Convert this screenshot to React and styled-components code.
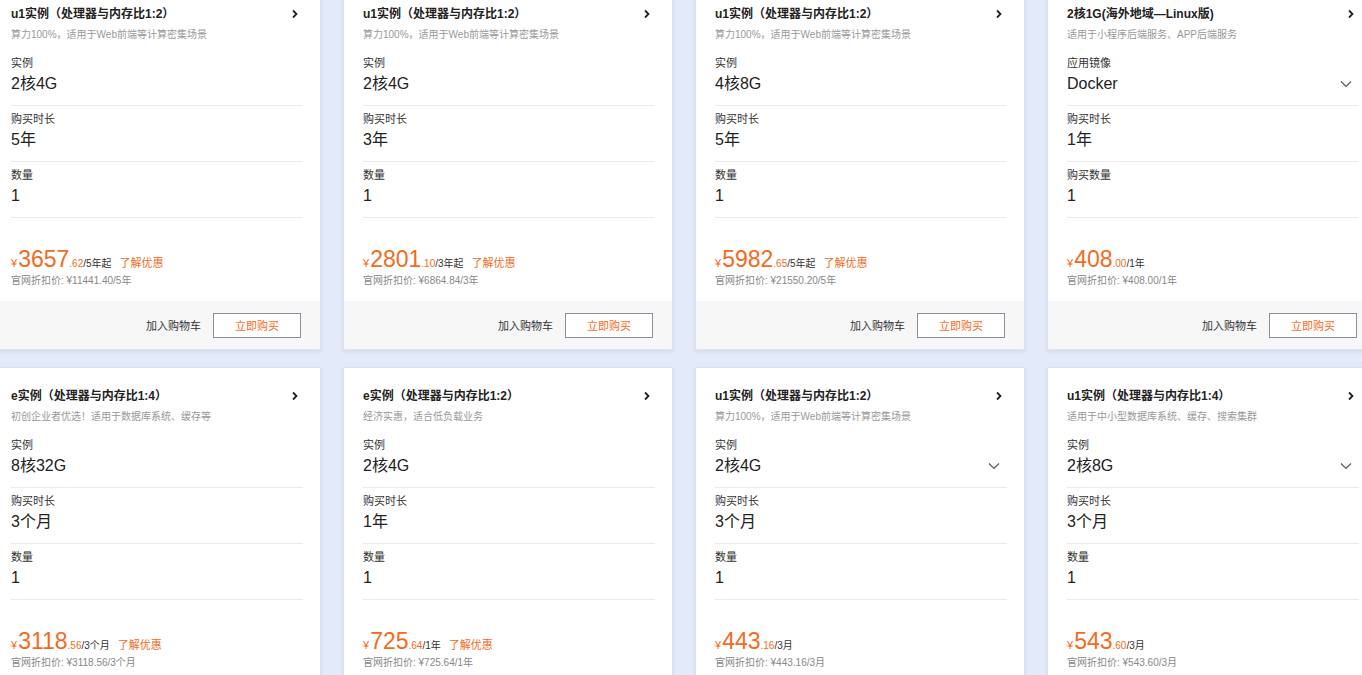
import React from 'react'
import styled, { createGlobalStyle } from 'styled-components'

const GlobalStyle = createGlobalStyle`
  html, body {
    margin: 0;
    padding: 0;
    background: #e3ebfa;
  }
  body {
    font-family: "Liberation Sans", Arial, "Noto Sans CJK SC", sans-serif;
    color: #333;
  }
`

const products = [
  {
    title: 'u1实例（处理器与内存比1:2）',
    desc: '算力100%，适用于Web前端等计算密集场景',
    fields: [
      { label: '实例', value: '2核4G' },
      { label: '购买时长', value: '5年' },
      { label: '数量', value: '1' },
    ],
    price: '3657', cents: '.62', unit: '/5年起', promo: true,
    origin: '¥11441.40/5年',
  },
  {
    title: 'u1实例（处理器与内存比1:2）',
    desc: '算力100%，适用于Web前端等计算密集场景',
    fields: [
      { label: '实例', value: '2核4G' },
      { label: '购买时长', value: '3年' },
      { label: '数量', value: '1' },
    ],
    price: '2801', cents: '.10', unit: '/3年起', promo: true,
    origin: '¥6864.84/3年',
  },
  {
    title: 'u1实例（处理器与内存比1:2）',
    desc: '算力100%，适用于Web前端等计算密集场景',
    fields: [
      { label: '实例', value: '4核8G' },
      { label: '购买时长', value: '5年' },
      { label: '数量', value: '1' },
    ],
    price: '5982', cents: '.65', unit: '/5年起', promo: true,
    origin: '¥21550.20/5年',
  },
  {
    title: '2核1G(海外地域—Linux版)',
    desc: '适用于小程序后端服务、APP后端服务',
    fields: [
      { label: '应用镜像', value: 'Docker', select: true },
      { label: '购买时长', value: '1年' },
      { label: '购买数量', value: '1' },
    ],
    price: '408', cents: '.00', unit: '/1年',
    origin: '¥408.00/1年',
  },
  {
    title: 'e实例（处理器与内存比1:4）',
    desc: '初创企业者优选！适用于数据库系统、缓存等',
    fields: [
      { label: '实例', value: '8核32G' },
      { label: '购买时长', value: '3个月' },
      { label: '数量', value: '1' },
    ],
    price: '3118', cents: '.56', unit: '/3个月', promo: true,
    origin: '¥3118.56/3个月',
  },
  {
    title: 'e实例（处理器与内存比1:2）',
    desc: '经济实惠，适合低负载业务',
    fields: [
      { label: '实例', value: '2核4G' },
      { label: '购买时长', value: '1年' },
      { label: '数量', value: '1' },
    ],
    price: '725', cents: '.64', unit: '/1年', promo: true,
    origin: '¥725.64/1年',
  },
  {
    title: 'u1实例（处理器与内存比1:2）',
    desc: '算力100%，适用于Web前端等计算密集场景',
    fields: [
      { label: '实例', value: '2核4G', select: true },
      { label: '购买时长', value: '3个月' },
      { label: '数量', value: '1' },
    ],
    price: '443', cents: '.16', unit: '/3月',
    origin: '¥443.16/3月',
  },
  {
    title: 'u1实例（处理器与内存比1:4）',
    desc: '适用于中小型数据库系统、缓存、搜索集群',
    fields: [
      { label: '实例', value: '2核8G', select: true },
      { label: '购买时长', value: '3个月' },
      { label: '数量', value: '1' },
    ],
    price: '543', cents: '.60', unit: '/3月',
    origin: '¥543.60/3月',
  },
]

function ArrowRight() {
  return (
    <svg width="8" height="10" viewBox="0 0 8 10">
      <polyline points="2,1.5 5.5,5 2,8.5" fill="none" stroke="#222" strokeWidth="1.8" />
    </svg>
  )
}

function ArrowDown() {
  return (
    <svg width="12" height="8" viewBox="0 0 12 8">
      <polyline points="1,1.5 6,6.5 11,1.5" fill="none" stroke="#555" strokeWidth="1.1" />
    </svg>
  )
}

export default function App() {
  return (
    <>
      <GlobalStyle />
      <Viewport>
        <Grid>
          {products.map((p, i) => (
            <Card key={i}>
              <Body>
                <Header>
                  <Title>{p.title}</Title>
                  <ArrowRight />
                </Header>
                <Desc>{p.desc}</Desc>
                <Fields>
                  {p.fields.map((f) => (
                    <Field key={f.label}>
                      <Label>{f.label}</Label>
                      <ValueRow>
                        <Value>{f.value}</Value>
                        {f.select && <ArrowDown />}
                      </ValueRow>
                    </Field>
                  ))}
                </Fields>
                <PriceLine>
                  <Yen>¥</Yen>
                  <Big>{p.price}</Big>
                  <Cents>{p.cents}</Cents>
                  <Unit>{p.unit}</Unit>
                  {p.promo && <Promo>了解优惠</Promo>}
                </PriceLine>
                <Origin>官网折扣价: {p.origin}</Origin>
              </Body>
              <Footer>
                <CartLink>加入购物车</CartLink>
                <BuyButton>立即购买</BuyButton>
              </Footer>
            </Card>
          ))}
        </Grid>
      </Viewport>
    </>
  )
}

const Viewport = styled.div`
  width: 1362px;
  height: 675px;
  overflow: hidden;
`

const Grid = styled.div`
  display: grid;
  grid-template-columns: repeat(4, 330px);
  column-gap: 22px;
  row-gap: 17px;
  margin: -15px 0 0 -9px;
`

const Card = styled.div`
  box-sizing: border-box;
  height: 365px;
  background: #fff;
  border: 1px solid #dde3ee;
  box-shadow: 0 2px 4px rgba(0, 0, 0, 0.08);
  display: flex;
  flex-direction: column;
`

const Body = styled.div`
  flex: 1;
  padding: 20px 17px 0 19px;
`

const Header = styled.div`
  display: flex;
  align-items: center;
  justify-content: space-between;
  padding-right: 4px;
  height: 16px;
`

const Title = styled.div`
  font-size: 12px;
  font-weight: bold;
  color: #222;
  line-height: 16px;
`

const Desc = styled.div`
  margin-top: 5px;
  font-size: 10px;
  line-height: 16px;
  color: #999;
`

const Fields = styled.div`
  margin-top: 7px;
`

const Field = styled.div`
  padding: 6px 0 10px;
  border-bottom: 1px solid #eaeaea;
`

const Label = styled.div`
  font-size: 11px;
  line-height: 14px;
  color: #333;
  margin-bottom: 3px;
`

const ValueRow = styled.div`
  display: flex;
  align-items: center;
  justify-content: space-between;
  padding-right: 7px;
`

const Value = styled.div`
  font-size: 16px;
  line-height: 22px;
  color: #222;
`

const PriceLine = styled.div`
  margin-top: 29px;
  height: 24px;
  display: flex;
  align-items: baseline;
  white-space: nowrap;
`

const Yen = styled.span`
  font-size: 11px;
  color: #f26b1d;
  margin-right: 1px;
`

const Big = styled.span`
  font-size: 23px;
  line-height: 24px;
  color: #f26b1d;
`

const Cents = styled.span`
  font-size: 10px;
  color: #f26b1d;
`

const Unit = styled.span`
  font-size: 10px;
  color: #333;
`

const Promo = styled.span`
  font-size: 11px;
  color: #f26b1d;
  margin-left: 8px;
`

const Origin = styled.div`
  margin-top: 3px;
  font-size: 10px;
  line-height: 14px;
  color: #888;
`

const Footer = styled.div`
  height: 48px;
  flex-shrink: 0;
  background: #f7f7f7;
  display: flex;
  align-items: center;
  justify-content: flex-end;
  padding-right: 19px;
`

const CartLink = styled.span`
  font-size: 11px;
  color: #333;
  margin-right: 12px;
`

const BuyButton = styled.button`
  box-sizing: border-box;
  width: 88px;
  height: 25px;
  background: #fff;
  border: 1px solid #8a8fa0;
  color: #f26b1d;
  font-size: 11px;
  font-family: inherit;
  padding: 0;
`
